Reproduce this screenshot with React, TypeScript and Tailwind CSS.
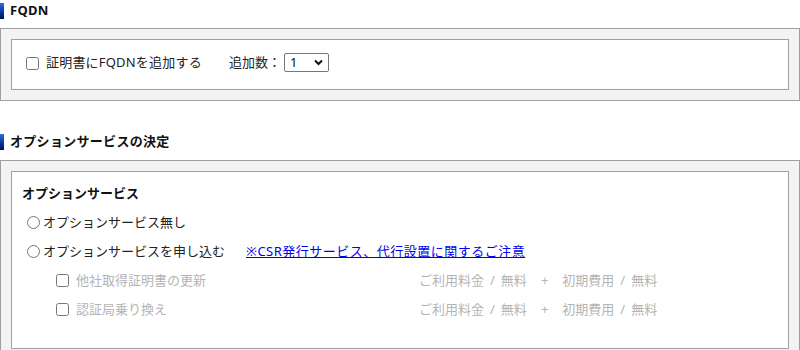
import { useState } from "react";

function SectionTitle({ title, className = "" }: { title: string; className?: string }) {
  return (
    <div className={`flex h-[22px] items-center ${className}`}>
      <span className="h-[16px] w-[4px] bg-linear-to-b from-[#2b6ee6] to-[#00105a]"></span>
      <h2 className="ml-[6px] text-[13px] font-bold tracking-[0.3px] text-[#111]">{title}</h2>
    </div>
  );
}

function Fee({ name, value }: { name: string; value: string }) {
  return (
    <span className="flex items-center">
      <span>{name}</span>
      <span className="mx-[6px]">/</span>
      <span>{value}</span>
    </span>
  );
}

function OptionRow({ label }: { label: string }) {
  return (
    <div className="flex h-[29px] items-center">
      <label className="flex w-[397px] items-center pl-[34px] text-[#b4b4b4]">
        <input type="checkbox" className="m-0 h-[13px] w-[13px]" />
        <span className="ml-[7px]">{label}</span>
      </label>
      <div className="flex items-center text-[#b4b4b4]">
        <Fee name="ご利用料金" value="無料" />
        <span className="mx-[14px]">+</span>
        <Fee name="初期費用" value="無料" />
      </div>
    </div>
  );
}

export default function App() {
  const [count, setCount] = useState("1");
  const [option, setOption] = useState<string | null>(null);

  return (
    <div className="w-[800px] bg-white text-[13px] text-[#222] font-['Noto_Sans','Noto_Sans_CJK_JP',sans-serif]">
      {/* FQDN */}
      <SectionTitle title="FQDN" />
      <div className="mt-[6px] border border-[#a0a0a0] bg-[#f3f3f3] p-[10px]">
        <div className="flex h-[51px] items-center border border-[#a0a0a0] bg-white pb-[3px] pl-[14px]">
          <label className="flex items-center">
            <input type="checkbox" className="m-0 h-[13px] w-[13px]" />
            <span className="ml-[7px] tracking-[0.2px]">証明書にFQDNを追加する</span>
          </label>
          <span className="ml-[27px]">追加数：</span>
          <div className="relative ml-[3px]">
            <select
              value={count}
              onChange={(e) => setCount(e.target.value)}
              className="h-[19px] w-[45px] appearance-none rounded-[2px] border border-[#767676] bg-white pl-[5px] text-[13px] leading-none text-[#111]"
            >
              <option>1</option>
              <option>2</option>
              <option>3</option>
              <option>4</option>
              <option>5</option>
            </select>
            <svg
              className="pointer-events-none absolute right-[6px] top-[6px]"
              width="9"
              height="7"
              viewBox="0 0 9 7"
            >
              <path d="M1 1.5 L4.5 5 L8 1.5" fill="none" stroke="#111" strokeWidth="2" />
            </svg>
          </div>
        </div>
      </div>

      {/* オプションサービスの決定 */}
      <SectionTitle title="オプションサービスの決定" className="mt-[30px]" />
      <div className="mt-[7px] border border-[#a0a0a0] bg-[#f3f3f3] p-[10px]">
        <div className="border border-[#a0a0a0] bg-white pb-[24px] pl-[10px] pt-[7px]">
          <div className="flex h-[29px] items-center font-bold text-[#111]">オプションサービス</div>
          <label className="flex h-[29px] items-center">
            <input
              type="radio"
              name="option"
              checked={option === "none"}
              onChange={() => setOption("none")}
              className="m-0 ml-[5px] h-[13px] w-[13px]"
            />
            <span className="ml-[3px]">オプションサービス無し</span>
          </label>
          <div className="flex h-[29px] items-center">
            <label className="flex items-center">
              <input
                type="radio"
                name="option"
                checked={option === "apply"}
                onChange={() => setOption("apply")}
                className="m-0 ml-[5px] h-[13px] w-[13px]"
              />
              <span className="ml-[3px]">オプションサービスを申し込む</span>
            </label>
            <a href="#" className="ml-[21px] tracking-[0.5px] text-[#0000ee] underline">
              ※CSR発行サービス、代行設置に関するご注意
            </a>
          </div>
          <OptionRow label="他社取得証明書の更新" />
          <OptionRow label="認証局乗り換え" />
        </div>
      </div>
    </div>
  );
}
